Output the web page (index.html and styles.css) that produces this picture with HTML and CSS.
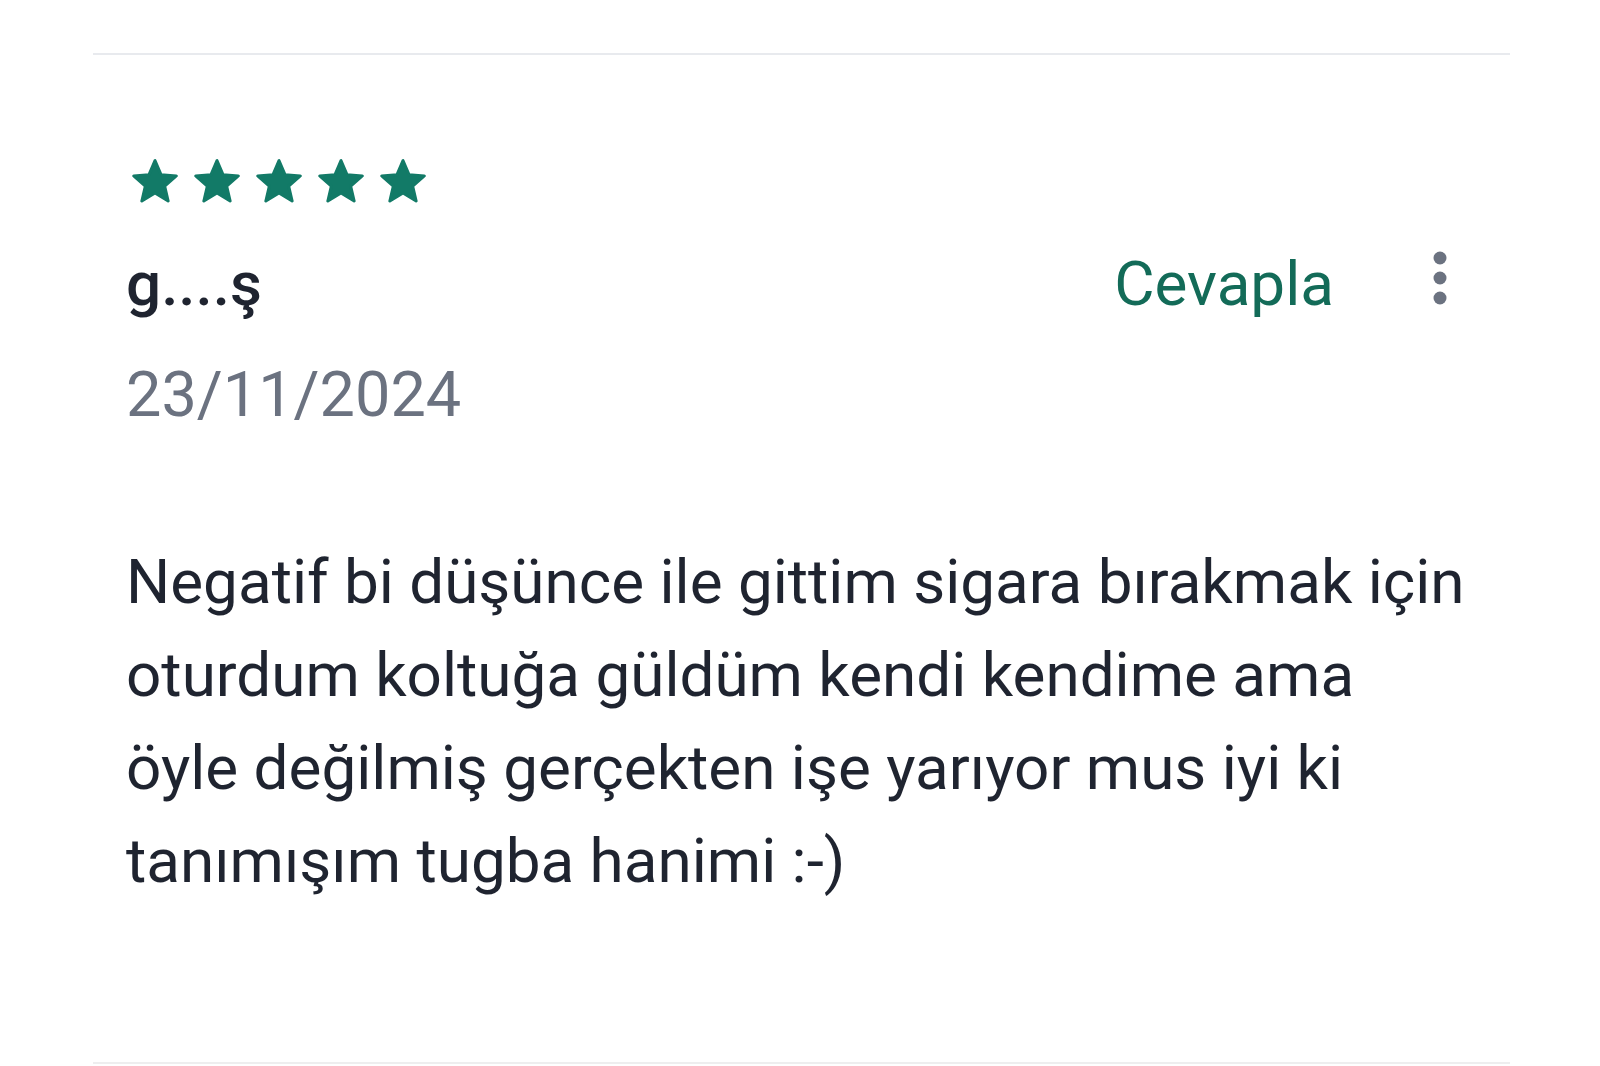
FILE: index.html
```html
<!DOCTYPE html>
<html lang="tr">
<head>
  <meta charset="UTF-8" />
  <meta name="viewport" content="width=device-width, initial-scale=1.0"/>
  <title>Yorum</title>
  <link rel="stylesheet" href="styles.css">
</head>
<body>
  <div class="review">
    <div class="stars">
      <svg class="star" viewBox="1.2 1.3 21.6 20.6"><path d="M12 17.27L18.18 21l-1.64-7.03L22 9.24l-7.19-.61L12 2 9.19 8.63 2 9.24l5.46 4.73L5.82 21z"/></svg>
      <svg class="star" viewBox="1.2 1.3 21.6 20.6"><path d="M12 17.27L18.18 21l-1.64-7.03L22 9.24l-7.19-.61L12 2 9.19 8.63 2 9.24l5.46 4.73L5.82 21z"/></svg>
      <svg class="star" viewBox="1.2 1.3 21.6 20.6"><path d="M12 17.27L18.18 21l-1.64-7.03L22 9.24l-7.19-.61L12 2 9.19 8.63 2 9.24l5.46 4.73L5.82 21z"/></svg>
      <svg class="star" viewBox="1.2 1.3 21.6 20.6"><path d="M12 17.27L18.18 21l-1.64-7.03L22 9.24l-7.19-.61L12 2 9.19 8.63 2 9.24l5.46 4.73L5.82 21z"/></svg>
      <svg class="star" viewBox="1.2 1.3 21.6 20.6"><path d="M12 17.27L18.18 21l-1.64-7.03L22 9.24l-7.19-.61L12 2 9.19 8.63 2 9.24l5.46 4.73L5.82 21z"/></svg>
    </div>

    <div class="head-row">
      <span class="author">g....ş</span>
      <div class="actions">
        <a class="reply-btn" href="#">Cevapla</a>
        <svg class="more" viewBox="0 0 14 54">
          <circle cx="7" cy="7" r="6.5"/>
          <circle cx="7" cy="27" r="6.5"/>
          <circle cx="7" cy="47" r="6.5"/>
        </svg>
      </div>
    </div>

    <div class="date">23/11/2024</div>

    <p class="comment">Negatif bi düşünce ile gittim sigara bırakmak için oturdum koltuğa güldüm kendi kendime ama öyle değilmiş gerçekten işe yarıyor mus iyi ki tanımışım tugba hanimi :-)</p>
  </div>
</body>
</html>
```

FILE: styles.css
```css
body {
  margin: 0;
  padding: 53px 0 0 0;
  background: #fff;
  font-family: Roboto, "Noto Sans", sans-serif;
  color: #1f2430;
}

.review {
  margin: 0 90px 0 93px;
  padding: 104px 32px 155px 33px;
  border-top: 2px solid #e8eaee;
  border-bottom: 2px solid #eeeeef;
}

.stars {
  display: flex;
  gap: 16px;
  height: 44px;
  margin-left: 6px;
}

.star {
  width: 46px;
  height: 44px;
  fill: #127a67;
  stroke: #127a67;
  stroke-width: 1.4;
  stroke-linejoin: round;
}

.head-row {
  display: flex;
  justify-content: space-between;
  align-items: center;
  margin-top: 44px;
  height: 74px;
}

.author {
  font-size: 62px;
  font-weight: 500;
  line-height: 74px;
  color: #1f2430;
}

.actions {
  display: flex;
  align-items: center;
  gap: 99px;
  padding-right: 31px;
}

.reply-btn {
  font-size: 62px;
  line-height: 74px;
  color: #136b58;
  text-decoration: none;
}

.more {
  width: 14px;
  height: 54px;
  fill: #6b7280;
  margin-top: -12px;
}

.date {
  margin-top: 37px;
  font-size: 63px;
  line-height: 74px;
  color: #6b7280;
}

.comment {
  margin: 103px 0 0 0;
  font-size: 62px;
  line-height: 93px;
  color: #1f2430;
}
```
